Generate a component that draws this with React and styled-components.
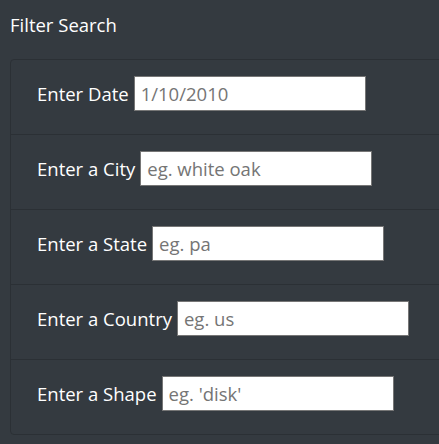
import React from 'react';
import styled, { createGlobalStyle } from 'styled-components';

const GlobalStyle = createGlobalStyle`
  html, body {
    margin: 0;
    padding: 0;
    background: #343a40;
    overflow: hidden;
  }
  body {
    font-family: "Open Sans", "Noto Sans", sans-serif;
    color: #fff;
  }
`;

const Page = styled.div`
  padding: 11px 0 0 10px;
`;

const Heading = styled.h5`
  margin: 0 0 21px;
  font-size: 18.5px;
  font-weight: 400;
  line-height: 27px;
`;

const ListGroup = styled.ul`
  list-style: none;
  margin: 0 -30px 0 0;
  padding: 0;
  border: 1px solid #2b3035;
  border-radius: 4px;
`;

const ListItem = styled.li`
  display: flex;
  align-items: flex-start;
  height: ${props => (props.first ? '74px' : '75px')};
  box-sizing: border-box;
  padding: 16px 20px 0 26px;
  border-top: ${props => (props.first ? 'none' : '1px solid #2b3035')};
`;

const Label = styled.label`
  font-size: 18.5px;
  line-height: 35px;
  margin-right: 5px;
  white-space: nowrap;
`;

const Input = styled.input`
  width: 232px;
  height: 35px;
  box-sizing: border-box;
  padding: 1px 6px 2px;
  border: 1px solid #767676;
  border-radius: 0;
  background: #fff;
  font-family: "Open Sans", "Noto Sans", sans-serif;
  font-size: 18.5px;
  color: #333;
  outline: none;

  &::placeholder {
    color: #757575;
  }
`;

const fields = [
  { id: 'datetime', label: 'Enter Date', placeholder: '1/10/2010' },
  { id: 'city', label: 'Enter a City', placeholder: 'eg. white oak' },
  { id: 'state', label: 'Enter a State', placeholder: 'eg. pa' },
  { id: 'country', label: 'Enter a Country', placeholder: 'eg. us' },
  { id: 'shape', label: 'Enter a Shape', placeholder: "eg. 'disk'" },
];

function App() {
  return (
    <Page>
      <GlobalStyle />
      <Heading>Filter Search</Heading>
      <ListGroup>
        {fields.map((field, i) => (
          <ListItem key={field.id} first={i === 0}>
            <Label htmlFor={field.id}>{field.label}</Label>
            <Input id={field.id} type="text" placeholder={field.placeholder} />
          </ListItem>
        ))}
      </ListGroup>
    </Page>
  );
}

export default App;
